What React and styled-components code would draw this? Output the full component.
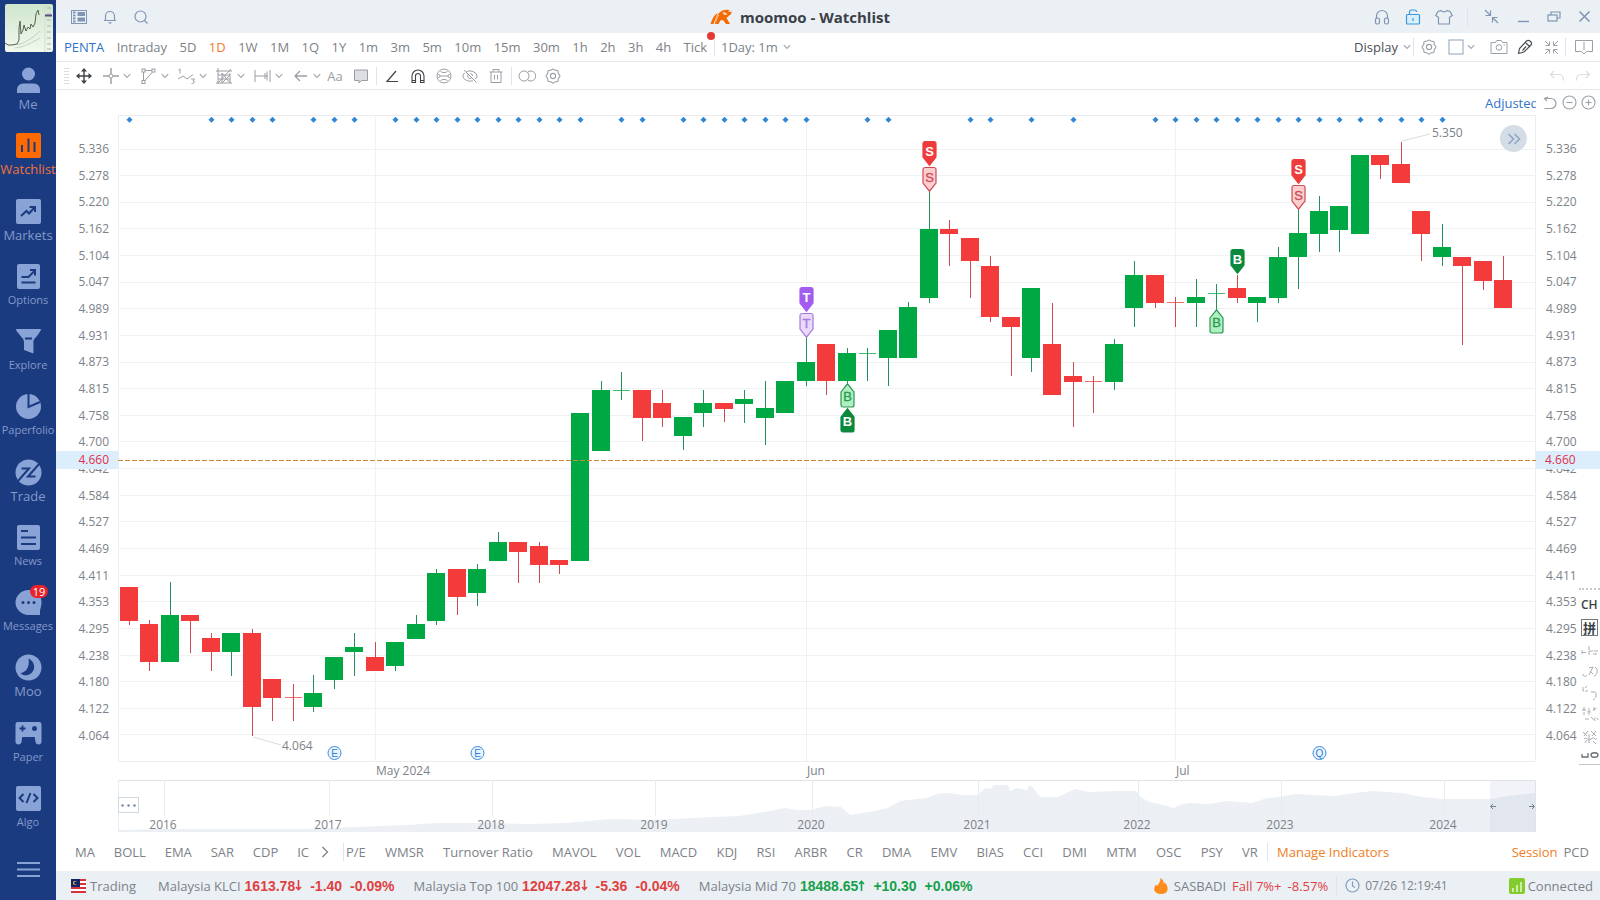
import React from "react";
import styled, { createGlobalStyle, css } from "styled-components";

const GlobalStyle = createGlobalStyle`
  *, *::before, *::after { box-sizing: border-box; }
  body {
    margin: 0;
    background: #fff;
    color: #7d8288;
    font-family: "Open Sans", "Noto Sans", "Noto Sans CJK SC", sans-serif;
    font-size: 13px;
    line-height: 18px;
  }
  button { font: inherit; color: inherit; background: none; border: 0; padding: 0; margin: 0; cursor: pointer; }
`;

/* ---------- shell ---------- */

const Shell = styled.div`
  display: flex;
  min-height: 100vh;
`;

const Sidebar = styled.nav`
  flex: 0 0 56px;
  min-width: 0;
  display: flex;
  flex-direction: column;
  align-items: stretch;
  background: #1b3b80;
`;

const Avatar = styled.div`
  height: 61px;
  padding: 4px 3px 0 5px;
  svg { display: block; border-radius: 2px; }
`;

const NavItem = styled.button`
  flex: 1;
  position: relative;
  display: flex;
  flex-direction: column;
  align-items: center;
  padding-top: 6px;
  color: ${(p) => (p.$active ? "#ff6a00" : "#8aa3d6")};
  font-size: ${(p) => (p.$small ? 11 : 13)}px;
  white-space: nowrap;
  svg { flex: none; }
  span { margin-top: 1px; color: ${(p) => (p.$active ? "#f0733a" : "#8399c9")}; }
`;

const Badge = styled.i`
  position: absolute;
  top: 2px;
  left: 30px;
  width: 18px;
  border-radius: 7px;
  background: #e8232b;
  color: #fff;
  font-style: normal;
  font-size: 11px;
  line-height: 13px;
  text-align: center;
`;

const MenuButton = styled.button`
  flex: 0 0 56px;
  padding-bottom: 6px;
  color: #8aa3d6;
  svg { display: block; margin: 0 auto; }
`;

const Main = styled.main`
  flex: 1;
  min-width: 0;
  display: flex;
  flex-direction: column;
`;

/* ---------- bars ---------- */

const TitleBar = styled.header`
  flex: 0 0 33px;
  display: flex;
  align-items: center;
  background: #ebf0f5;
  color: #7f95b3;
`;

const TitleLeft = styled.div`
  flex: 1 1 0;
  display: flex;
  padding-left: 6px;
`;

const Title = styled.h1`
  display: flex;
  align-items: center;
  gap: 8px;
  margin: 0;
  color: #3b4048;
  font-size: 15px;
  font-weight: 700;
  line-height: 20px;
`;

const TitleRight = styled.div`
  flex: 1 1 0;
  display: flex;
  align-items: center;
  justify-content: flex-end;
  padding-left: 62px;
`;

const IconButton = styled.button`
  flex: none;
  display: inline-flex;
  align-items: center;
  justify-content: center;
  width: ${(p) => p.$w || 26}px;
  height: 24px;
  ${(p) => p.$color && css`color: ${p.$color};`}
`;

const DropButton = styled.button`
  flex: none;
  display: inline-flex;
  align-items: center;
  gap: ${(p) => p.$gap || 3}px;
  height: 24px;
  ${(p) => p.$color && css`color: ${p.$color};`}
`;

const Divider = styled.span`
  flex: none;
  width: 1px;
  height: 18px;
  margin: 0 ${(p) => p.$m ?? 2}px;
  background: #dfe4ea;
`;

const PeriodBar = styled.div`
  flex: 0 0 29px;
  display: flex;
  align-items: center;
  justify-content: space-between;
  padding-left: 8px;
  border-bottom: 1px solid #e6e9ed;
`;

const Periods = styled.div`
  flex: 0 1 727px;
  display: flex;
  align-items: center;
  justify-content: space-between;
`;

const Period = styled.button`
  position: relative;
  color: ${(p) => (p.$tone === "blue" ? "#2f74c8" : p.$tone === "orange" ? "#f47b2a" : "#7d8288")};
  white-space: nowrap;
`;

const RedDot = styled.i`
  position: absolute;
  top: -6px;
  right: -8px;
  width: 8px;
  height: 8px;
  border-radius: 50%;
  background: #e53935;
`;

const BarRight = styled.div`
  display: flex;
  align-items: center;
  color: #9aa0a8;
`;

const LayoutPicker = styled(DropButton)`
  margin: 0 11px 0 6px;
`;

const DrawBar = styled.div`
  flex: 0 0 28px;
  display: flex;
  align-items: center;
  padding: 0 4px 0 8px;
  border-bottom: 1px solid #e6e9ed;
  color: #9a9ea4;
`;

const DropGroup = styled.div`
  display: flex;
  gap: 9px;
  padding: 0 1px 0 3px;
`;

const Spacer = styled.span`
  flex: 1;
`;

/* ---------- chart ---------- */

const ChartHead = styled.div`
  flex: 0 0 25px;
  display: flex;
  align-items: center;
  justify-content: flex-end;
  padding-right: 2px;
  color: #9aa0a8;
`;

const Adjusted = styled.button`
  width: 51px;
  margin-right: 4px;
  overflow: hidden;
  color: #2f74c8;
  text-align: left;
  white-space: nowrap;
`;

const ChartRow = styled.div`
  position: relative;
  flex: 1 0 0;
  min-height: 0;
  display: flex;
`;

const Axis = styled.ul`
  position: relative;
  flex: 0 0 ${(p) => (p.$right ? 64 : 62)}px;
  display: flex;
  flex-direction: column;
  justify-content: space-between;
  margin: 0;
  padding: 25px 9px 35px ${(p) => (p.$right ? 10 : 0)}px;
  list-style: none;
  text-align: ${(p) => (p.$right ? "left" : "right")};
  font-size: 12px;
  line-height: 18px;
`;

const LastPrice = styled.li`
  position: absolute;
  top: 336px;
  left: 0;
  right: 0;
  padding: 0 9px;
  background: #dcedfb;
  color: #e0314b;
`;

const Plot = styled.div`
  flex: 1;
  min-width: 0;
  svg { display: block; width: 100%; height: 100%; }
`;

const NavigatorRow = styled.div`
  flex: 0 0 52px;
  padding: 0 64px 0 62px;
  svg { display: block; width: 100%; height: 100%; }
`;

const JumpButton = styled.button`
  position: absolute;
  top: 10px;
  right: 73px;
  width: 27px;
  height: 27px;
  border-radius: 50%;
  background: #d4dde6;
  color: #8ea5c6;
  svg { display: block; margin: 0 auto; }
`;

const ImeBar = styled.aside`
  position: absolute;
  right: 0;
  bottom: 15px;
  width: 21px;
  height: 177px;
  display: flex;
  flex-direction: column;
  align-items: flex-start;
  padding: 6px 0 0 2px;
  background: #fff;
  border-top: 2px dotted #c8cbd0;
  border-bottom: 1px solid #c2c5ca;
  color: #3b3f46;
  font-size: 12px;
  font-weight: 600;
  line-height: 18px;
`;

const ImeMode = styled.span`
  width: 17px;
  height: 17px;
  margin: 5px 0 8px;
  border: 1px solid #777;
  font-family: "Noto Sans CJK SC", sans-serif;
  font-size: 13px;
  font-weight: 700;
  line-height: 15px;
  text-align: center;
`;

/* ---------- indicators and status ---------- */

const IndicatorBar = styled.div`
  flex: 0 0 39px;
  display: flex;
  align-items: center;
  padding: 0 11px 0 19px;
  white-space: nowrap;
`;

const IndicatorGroup = styled.div`
  flex: 0 1 ${(p) => p.$w}px;
  display: flex;
  justify-content: space-between;
`;

const Indicator = styled.button`
  color: ${(p) => (p.$hot ? "#f07d22" : "#7d8288")};
`;

const Sessions = styled.div`
  display: flex;
  gap: 6px;
  margin-left: auto;
`;

const StatusBar = styled.footer`
  flex: 0 0 29px;
  display: flex;
  align-items: center;
  padding: 0 7px 0 15px;
  background: #ebf0f5;
  white-space: nowrap;
`;

const Market = styled.div`
  display: flex;
  align-items: center;
  gap: 4px;
  width: 87px;
`;

const Quote = styled.div`
  display: flex;
  align-items: center;
  gap: 8px;
  margin-right: 19px;
`;

const QuoteName = styled.span`
  margin-right: -4px;
`;

const QuoteValue = styled.b`
  display: inline-flex;
  align-items: center;
  font-family: "Liberation Sans", Arial, sans-serif;
  font-size: 14px;
  color: ${(p) => (p.$up ? "#17a04a" : "#e0413f")};
`;

const Alert = styled.div`
  display: flex;
  align-items: center;
  gap: 6px;
  margin-left: auto;
  em { font-style: normal; color: #e0413f; }
`;

const Clock = styled.time`
  display: flex;
  align-items: center;
  gap: 5px;
  margin-right: 61px;
  font-size: 12px;
`;

const Connection = styled.div`
  display: flex;
  align-items: center;
  gap: 3px;
`;

/* ---------- icons ---------- */

const Svg = ({ w = 16, h = 16, sw = 1, children }) => (
  <svg width={w} height={h} viewBox={`0 0 ${w} ${h}`} fill="none" stroke="currentColor" strokeWidth={sw} aria-hidden="true">
    {children}
  </svg>
);

const Chevron = () => (
  <Svg w={8} h={6} sw={1.2}><path d="M.8 1.2 4 4.4l3.2-3.2" stroke="#a3a8af" /></Svg>
);

const HexIcon = () => (
  <Svg sw={1.1}>
    <path d="M5.6 2.2c.9 0 1.4-1.2 2.4-1.2s1.5 1.2 2.4 1.2c1 0 2.100-.2 2.600.7.5.8-.2 1.700.3 2.600.4.8 1.600 1.300 1.600 2.500s-1.200 1.700-1.600 2.500c-.5.9.2 1.800-.3 2.600-.5.9-1.600.7-2.600.7-.9 0-1.400 1.400-2.400 1.400s-1.500-1.400-2.400-1.400c-1 0-2.100.2-2.600-.7-.5-.8.2-1.700-.3-2.600C2.300 9.700 1.100 9.200 1.100 8s1.200-1.700 1.600-2.500c.5-.9-.2-1.800.3-2.600.5-.9 1.600-.7 2.600-.7z" />
    <circle cx="8" cy="8" r="2.600" />
  </Svg>
);

const S = "#1b3b80";
const navIcons = {
  Me: <><circle cx="13.500" cy="7" r="6.500" fill="currentColor" /><path d="M2 26v-3.500a6 6 0 0 1 6-6h11a6 6 0 0 1 6 6V26z" fill="currentColor" /></>,
  Watchlist: <><rect x="1" y="1" width="25" height="25" rx="2" fill="currentColor" /><path d="M7 13v7M13.500 6.500V20M19.500 10v10" stroke={S} strokeWidth="2" /></>,
  Markets: <><rect x="1" y="1" width="25" height="25" rx="2" fill="currentColor" /><path d="M6 18l5.500-5 2.500 2.500 5.500-6M14.500 9H20v5" stroke={S} strokeWidth="2" fill="none" /></>,
  Options: <><rect x="2" y="1" width="23" height="25" rx="2" fill="currentColor" /><path d="M6.500 14h7l6-6M15 7h5v5.500M6.500 19.500h14" stroke={S} strokeWidth="2" fill="none" /></>,
  Explore: <><path d="M2 1h23c1.200 0 1.200 1 .6 1.800L22 8c-2 2.600-3.600 3-3.600 6v11.500L9 22V14c0-3-1.600-3.500-3.400-6L1.400 2.800C.8 2 .8 1 2 1z" fill="currentColor" /><path d="M10 10.500h7" stroke={S} strokeWidth="2" /></>,
  Paperfolio: <><circle cx="13.500" cy="13.500" r="12.500" fill="currentColor" /><path d="M13.500 0v14L25 9" stroke={S} strokeWidth="2" /></>,
  Trade: <><circle cx="13.500" cy="13.500" r="13" fill="currentColor" /><path d="M6.500 9.500H14L3 22M24.500 4.500 13 17.500h7.500" stroke={S} strokeWidth="2" /></>,
  News: <><rect x="2" y="1" width="23" height="25" rx="2" fill="currentColor" /><path d="M6 7h7M6 13.500h15M6 20h15" stroke={S} strokeWidth="2" /></>,
  Messages: <><path d="M13.500 1A13 12.500 0 0 1 26.500 14c0 3-1.500 6-1.500 8.500V26H13.500a13 12.500 0 0 1 0-25z" fill="currentColor" /><g fill={S}><circle cx="8" cy="13.500" r="1.500" /><circle cx="13.500" cy="13.500" r="1.500" /><circle cx="19" cy="13.500" r="1.500" /></g></>,
  Moo: <><circle cx="13.500" cy="13.500" r="13" fill="currentColor" /><path d="M13.500 4.500c6 3 7.500 9.500 3.500 14-3.500 3.800-9.500 3.500-11.500.5 5-.3 9.500-5.500 8-14.500z" fill={S} /></>,
  Paper: <><path d="M3 2h21c2 0 2.500 1 2.500 3v17c0 3-5.500 3.500-6 0l-.7-5H7.200l-.7 5c-.5 3.500-6 3-6 0V5c0-2 .5-3 2.500-3z" fill="currentColor" /><path d="M4.500 8.500h6M7.500 5.500v6" stroke={S} strokeWidth="1.800" /><circle cx="19.500" cy="8.500" r="2.500" fill={S} /></>,
  Algo: <><rect x="1" y="1" width="25" height="25" rx="2" fill="currentColor" /><path d="M8.500 9 4.500 13l4 4M18.500 9l4 4-4 4M15.500 8l-4 10" stroke={S} strokeWidth="2" /></>,
};

const NavIcon = ({ name }) => <Svg w={27} h={27}><g stroke="none">{navIcons[name]}</g></Svg>;

const navItems = [
  { name: "Me" },
  { name: "Watchlist", active: true },
  { name: "Markets" },
  { name: "Options", small: true },
  { name: "Explore", small: true },
  { name: "Paperfolio", small: true },
  { name: "Trade" },
  { name: "News", small: true },
  { name: "Messages", small: true, badge: 19 },
  { name: "Moo" },
  { name: "Paper", small: true },
  { name: "Algo", small: true },
];

const drawDrops = [
  ["Cross line", <><path d="M9 0v16M1 8h16" stroke="#6c7076" /><circle cx="9" cy="8" r="2" fill="#fff" /></>],
  ["Shapes", <><path d="M3.500 4v9M5 2.500h7M12.500 4 4.500 13" /><rect x="2" y="1" width="3" height="3" /><rect x="12" y="1" width="3" height="3" /><rect x="2" y="12.500" width="3" height="3" /></>],
  ["Waves", <><path d="M.5 2 2 1v4.500M0 11l5-3 4 3 6-4.500M13 11h3.500l-1.500 2c2 0 2 2.500-.5 2.500h-1" /></>],
  ["Fibonacci", <><path d="M2 0v16M0 3h16M2 7h12M2 11h12M0 15h16M2 15 15 1M6 5v10M14 5v10M6 5l8 10M6 15l8-8" /></>],
  ["Measure", <><path d="M1 2v12M16 2v12M1 8h13M11 5v6M13 3.500v9" /></>],
  ["Arrow", <path d="M15 8H3M8 3 3 8l5 5" strokeWidth="1.300" />],
];

/* ---------- chart data (plot units, origin at the plot's top left corner) ---------- */

const STEP = 20.522;
const cx = (i) => Math.round(10.5 + STEP * i);

// [up, body top, body bottom, high, low]
const candles = [
  [0, 472, 506, 472, 510], [0, 509, 547, 505, 556], [1, 500, 547, 467, 547], [0, 500, 506, 500, 538],
  [0, 523, 537, 518, 556], [1, 518, 537, 518, 561], [0, 518, 592, 514, 621], [0, 564, 583, 564, 606],
  [0, 582, 583, 569, 606], [1, 578, 592, 560, 597], [1, 542, 565, 542, 574], [1, 532, 537, 518, 561],
  [0, 542, 556, 527, 556], [1, 527, 551, 527, 556], [1, 509, 524, 500, 524], [1, 458, 506, 454, 510],
  [0, 454, 482, 454, 500], [1, 454, 478, 449, 491], [1, 427, 446, 417, 446], [0, 427, 437, 427, 468],
  [0, 431, 450, 427, 468], [0, 445, 450, 445, 459], [1, 298, 446, 298, 446], [1, 275, 336, 266, 336],
  [1, 275, 276, 257, 285], [0, 275, 303, 275, 326], [0, 288, 303, 275, 312], [1, 302, 321, 302, 335],
  [1, 288, 298, 275, 312], [0, 288, 294, 288, 307], [1, 284, 289, 275, 308], [1, 293, 303, 266, 330],
  [1, 266, 298, 266, 298], [1, 247, 266, 222, 271], [0, 229, 266, 229, 280], [1, 238, 266, 233, 268],
  [1, 238, 239, 233, 266], [1, 215, 243, 215, 271], [1, 192, 243, 187, 243], [1, 114, 183, 76, 188],
  [0, 114, 119, 105, 151], [0, 123, 146, 123, 183], [0, 151, 202, 141, 207], [0, 202, 212, 202, 261],
  [1, 173, 243, 173, 257], [0, 229, 280, 188, 280], [0, 261, 267, 247, 312], [0, 266, 267, 261, 298],
  [1, 229, 267, 224, 275], [1, 160, 193, 146, 212], [0, 160, 188, 160, 193], [0, 187, 188, 182, 212],
  [1, 182, 188, 164, 212], [1, 178, 179, 169, 195], [0, 173, 183, 160, 188], [1, 182, 188, 182, 207],
  [1, 142, 183, 132, 188], [1, 118, 142, 95, 174], [1, 96, 119, 81, 137], [1, 91, 115, 91, 137],
  [1, 40, 119, 40, 119], [0, 40, 50, 40, 64], [0, 49, 68, 27, 68], [0, 96, 119, 96, 146],
  [1, 132, 142, 109, 151], [0, 142, 151, 142, 230], [0, 146, 166, 146, 175], [0, 165, 193, 141, 193],
];

const newsDays = [0, 4, 5, 6, 7, 9, 10, 11, 13, 14, 15, 16, 17, 18, 19, 20, 21, 22, 24, 25, 27, 28, 29, 30, 31, 32, 33, 36, 37, 41, 42, 44, 46,
  50, 51, 52, 53, 54, 55, 56, 57, 58, 59, 60, 61, 62, 63, 64];

const tones = {
  T: { solid: "#a35cf0", line: "#a57be0", soft: "#ead9fb" },
  S: { solid: "#ef3b3b", line: "#cf4a55", soft: "#fbcfd0" },
  B: { solid: "#0c8a3c", line: "#2c9656", soft: "#aef0bf" },
};

// [letter, candle index, top, filled, points up]
const flags = [
  ["T", 33, 172, true, false], ["T", 33, 198, false, false],
  ["B", 35, 268, false, true], ["B", 35, 293, true, true],
  ["S", 39, 26, true, false], ["S", 39, 52, false, false],
  ["B", 53, 194, false, true], ["B", 54, 134, true, false],
  ["S", 57, 44, true, false], ["S", 57, 70, false, false],
];

const Flag = ({ letter, x, y, filled, up }) => {
  const t = tones[letter];
  const d = up
    ? "M-6.500 9 0 .8 6.500 9v13a2 2 0 0 1-2 2h-9a2 2 0 0 1-2-2z"
    : "M-4.500.5h9a2 2 0 0 1 2 2V16L0 24.200-6.500 16V2.500a2 2 0 0 1 2-2z";
  return (
    <g transform={`translate(${x + 0.5} ${y})`}>
      <path d={d} fill={filled ? t.solid : t.soft} stroke={filled ? t.solid : t.line} strokeWidth="1.200" />
      <text y={up ? 18 : 15} textAnchor="middle" fontSize="13" fontWeight={filled ? 700 : 400}
        fontFamily="Liberation Sans, sans-serif" fill={filled ? "#fff" : t.line}
        stroke={filled ? "none" : t.line} strokeWidth="0.3">{letter}</text>
    </g>
  );
};

const prices = ["5.336", "5.278", "5.220", "5.162", "5.104", "5.047", "4.989", "4.931", "4.873", "4.815", "4.758", "4.700",
  "4.642", "4.584", "4.527", "4.469", "4.411", "4.353", "4.295", "4.238", "4.180", "4.122", "4.064"];

const gridY = prices.map((_, i) => Math.round(33.5 + i * 26.636) + 0.5);

const PriceAxis = ({ right }) => (
  <Axis $right={right}>
    {prices.map((p) => <li key={p}>{p}</li>)}
    <LastPrice>4.660</LastPrice>
  </Axis>
);

const CandleChart = () => (
  <svg viewBox="0 0 1418 665" role="img" aria-label="PENTA daily candlestick chart">
    <g stroke="#eff1f3" fill="none">
      <path d="M.5.500H1417.500V646.500H.5z" stroke="#ebeef0" />
      {gridY.map((y) => <path key={y} d={`M0 ${y}H1418`} />)}
      {[12, 33, 51].map((i) => <path key={i} d={`M${cx(i) + 0.5} 0V646`} />)}
    </g>
    {newsDays.map((i) => (
      <path key={i} d={`M${cx(i) + 0.5} 1.800l3 3-3 3-3-3z`} fill="#2f86d2" />
    ))}
    {candles.map(([up, top, bottom, high, low], i) => {
      const c = up ? "#00a843" : "#f23b3a";
      const doji = bottom - top < 2;
      return (
        <g key={i} fill={c}>
          <rect x={cx(i)} y={high} width="1" height={low - high} fill={up ? "#23905a" : "#cf4a4f"} />
          <rect x={cx(i) - 9 + (doji ? 1 : 0)} y={top} width={doji ? 17 : 18} height={Math.max(1, bottom - top)} opacity={doji ? 0.75 : 1} />
        </g>
      );
    })}
    <path d="M0 345.500H1418" stroke="#c98a3a" strokeDasharray="5 2" />
    {flags.map(([letter, i, y, filled, up]) => (
      <Flag key={`${i}-${y}`} letter={letter} x={cx(i)} y={y} filled={filled} up={up} />
    ))}
    <g stroke="#d9dcdf" fill="none">
      <path d="M135 622 163 630" />
      <path d="M1284 26 1312 19" />
    </g>
    <g fontSize="12" fill="#7d8288">
      <text x="164" y="635">4.064</text>
      <text x="1314" y="22">5.350</text>
      <text x="258" y="660">May 2024</text>
      <text x="689" y="660">Jun</text>
      <text x="1058" y="660">Jul</text>
    </g>
    {[[10, "E"], [17, "E"], [58, "Q"]].map(([i, t]) => (
      <g key={i}>
        <circle cx={cx(i) + 0.5} cy="638" r="6.500" fill="#eaf4fd" stroke="#3b8fe0" />
        <text x={cx(i) + 0.5} y="642" textAnchor="middle" fontSize="10" fontFamily="Liberation Sans, sans-serif" fill="#2f7fd6">{t}</text>
      </g>
    ))}
  </svg>
);

const profile = [[0, 50], [46, 49], [187, 49], [238, 47], [289, 45], [320, 43], [374, 43], [412, 44], [447, 43], [493, 39], [537, 40],
  [575, 38], [595, 37], [621, 36], [646, 32], [667, 28], [680, 30], [694, 30], [707, 26], [723, 27], [732, 35], [751, 32], [770, 28],
  [782, 21], [790, 20], [809, 18], [818, 14], [829, 13], [845, 15], [860, 15], [867, 8], [873, 9], [876, 5], [890, 5], [892, 11],
  [899, 8], [909, 10], [912, 5], [917, 10], [922, 17], [940, 17], [950, 12], [958, 9], [970, 12], [998, 11], [1018, 11], [1024, 18],
  [1032, 22], [1045, 25], [1056, 28], [1062, 25], [1071, 23], [1090, 24], [1110, 21], [1134, 23], [1149, 18], [1160, 17], [1178, 14],
  [1216, 16], [1236, 13], [1255, 11], [1284, 13], [1304, 17], [1326, 19], [1372, 19], [1391, 16], [1415, 13], [1418, 13]];

const years = [["2016", 46], ["2017", 211], ["2018", 374], ["2019", 537], ["2020", 694], ["2021", 860], ["2022", 1020], ["2023", 1163], ["2024", 1326]];

const TimeNavigator = () => (
  <svg viewBox="0 0 1418 52" role="img" aria-label="Price history from 2016 to 2024">
    <path d={`M0 52 ${profile.map(([x, y]) => `L${x} ${y}`).join(" ")} V52z`} fill="#ecf0f4" />
    <g stroke="#e8ebef">
      <path d="M0 .5H1418" stroke="#dfe2e6" />
      <path d="M.5 0V52M1417.500 0V52" />
      {years.map(([y, x]) => <path key={y} d={`M${x + 0.5} 0V36`} />)}
    </g>
    <rect x="1372" y="1" width="46" height="51" fill="#c3cde0" opacity=".24" />
    <g stroke="#6f7f96" fill="none"><path d="M1378 26.500h-5M1375 24l-2.500 2.500 2.500 2.500M1411 26.500h5M1414 24l2.500 2.500-2.500 2.500" /></g>
    <rect x=".5" y="17.500" width="20" height="15" fill="#fff" stroke="#cfd9e2" />
    <g fill="#6d87a8"><circle cx="4.500" cy="25.500" r="1.200" /><circle cx="10.500" cy="25.500" r="1.200" /><circle cx="16.500" cy="25.500" r="1.200" /></g>
    <g fontSize="12" fill="#7d8288" textAnchor="middle">
      {years.map(([y, x]) => <text key={y} x={x - 1} y="49">{y}</text>)}
    </g>
  </svg>
);

const indicatorsA = ["MA", "BOLL", "EMA", "SAR", "CDP", "IC"];
const indicatorsB = ["P/E", "WMSR", "Turnover Ratio", "MAVOL", "VOL", "MACD", "KDJ", "RSI", "ARBR", "CR", "DMA", "EMV", "BIAS", "CCI", "DMI", "MTM", "OSC", "PSY", "VR"];
const periods = ["Intraday", "5D", "1D", "1W", "1M", "1Q", "1Y", "1m", "3m", "5m", "10m", "15m", "30m", "1h", "2h", "3h", "4h"];
const quotes = [
  ["Malaysia KLCI", "1613.78", "-1.40", "-0.09%", false],
  ["Malaysia Top 100", "12047.28", "-5.36", "-0.04%", false],
  ["Malaysia Mid 70", "18488.65", "+10.30", "+0.06%", true],
];

const ShrinkCorners = () => (
  <Svg w={15} h={15}><path d="M1 1l4 4M5.500 1.500v4h-4M14 1l-4 4M9.500 1.500v4h4M1 14l4-4M5.500 13.500v-4h-4M14 14l-4-4M9.500 13.500v-4h4" /></Svg>
);

export default function App() {
  return (
    <>
      <GlobalStyle />
      <Shell>
        <Sidebar>
          <Avatar>
            <svg width="48" height="48" viewBox="0 0 48 48" role="img" aria-label="Profile picture">
              <defs><linearGradient id="av" x2="0" y2="1"><stop offset="0" stopColor="#cfe6cd" /><stop offset="1" stopColor="#f2f8ee" /></linearGradient></defs>
              <rect width="48" height="48" fill="url(#av)" />
              <path d="M0 39l3 2h4l5-1 2-4 0-12 1-7 1 13 2-4 1-5 2 6 2-4 2 2 1-5 2 3 2-4 1-9 2-4 1 5" fill="none" stroke="#55604f" />
              <path d="M12 41c8-2 16-7 23-14M10 44c10-1 18-6 25-10" fill="none" stroke="#b9c4b6" strokeWidth=".8" />
              <path d="M40 0V48" stroke="#d5ddd2" />
              <path d="M42 4h4M42 10h4M42 16h4M42 22h4M42 28h4M42 34h4M42 40h4M42 45h4" stroke="#a9b3a8" />
              <path d="M40 11.500h7" stroke="#5c4a86" strokeWidth="2" />
            </svg>
          </Avatar>
          {navItems.map((n) => (
            <NavItem key={n.name} $active={n.active} $small={n.small}>
              <NavIcon name={n.name} />
              <span>{n.name}</span>
              {n.badge && <Badge>{n.badge}</Badge>}
            </NavItem>
          ))}
          <MenuButton aria-label="Menu">
            <Svg w={24} h={16} sw={2}><path d="M1 2h23M1 8.500h23M1 15h23" /></Svg>
          </MenuButton>
        </Sidebar>

        <Main>
          <TitleBar>
            <TitleLeft>
              <IconButton $w={33} aria-label="Layout">
                <Svg w={16} h={14}><rect x=".5" y=".5" width="15" height="13" /><path d="M2 2.500h2.500M2 5.500h2.500M2 8.500h2.500M2 11.500h2.500" strokeWidth="2" /><path d="M6.500 4h7.500M6.500 9.500h7.500" strokeWidth="4" /></Svg>
              </IconButton>
              <IconButton $w={29} aria-label="Notifications">
                <Svg w={14} h={14} sw={1.2}><path d="M1 10.500h12M2.500 10.500V6a4.500 4.500 0 0 1 9 0v4.500M5.500 12.800h3" /></Svg>
              </IconButton>
              <IconButton $w={33} aria-label="Search">
                <Svg w={14} h={14} sw={1.2}><circle cx="6.500" cy="6.500" r="5.500" /><path d="m10.500 10.500 3 3" /></Svg>
              </IconButton>
            </TitleLeft>
            <Title>
              <svg width="22" height="16" viewBox="0 0 22 16" aria-hidden="true">
                <path d="M.5 15C2 10 4.500 5.500 7.500 4L5.500 9.500 3.500 15z" fill="#f56a00" />
                <path d="M5 15C5.500 9 8 3.500 12.500 1.500c2.500-1 6-.8 7.500-.2l-2 1.200c1 .6 2.500.5 3.500-.2.3 2.300-.8 3.700-2.500 4.200-1 1.500-2 1.500-2.500 2.500l3.500 6h-4L13.500 11.500c-1.500-1-2.500-.5-3.500.5L8.500 15z" fill="#f56a00" />
                <path d="M12.500 3.500c2-.8 3.500 0 5 2-1.500 1-4.500.5-5-2z" fill="#fbd9bf" />
                <path d="M9 6c-1.500 2-2.500 4-3 6.500" stroke="#fbd9bf" fill="none" strokeWidth=".8" />
              </svg>
              moomoo - Watchlist
            </Title>
            <TitleRight>
              <IconButton $w={31} aria-label="Support">
                <Svg sw={1.2}><path d="M2.500 10V7a5.500 5.500 0 0 1 11 0v3" /><rect x="1.500" y="9" width="4" height="6" rx="1.800" /><rect x="10.500" y="9" width="4" height="6" rx="1.800" /></Svg>
              </IconButton>
              <IconButton $w={31} $color="#3a9ad9" aria-label="Unlock trade">
                <Svg sw={1.2}><rect x="1.500" y="5.500" width="13" height="9.500" rx="1" fill="#d9effb" /><path d="M4.500 5V3.200A2 2 0 0 1 6.500 1h3a2 2 0 0 1 2 2M8 9v3" /></Svg>
              </IconButton>
              <IconButton $w={31} aria-label="Theme">
                <Svg w={18} h={16} sw={1.2}><path d="M6 1.500c1 1.800 5 1.800 6 0l3 1 2.300 4-2.800 1.800V15h-11V8.300L.7 6.500l2.300-4z" /></Svg>
              </IconButton>
              <Divider $m={8} />
              <IconButton $w={31} aria-label="Compact">
                <Svg w={15} h={15} sw={1.2}><path d="M1 1l5 5M6.500 1.500v5h-5M14 14 9 9M8.500 13.500v-5h5" /></Svg>
              </IconButton>
              <IconButton $w={31} aria-label="Minimize"><Svg w={12} sw={1.4}><path d="M1 12.500h11" /></Svg></IconButton>
              <IconButton $w={31} aria-label="Restore">
                <Svg w={14} h={14} sw={1.2}><rect x="1" y="5" width="9" height="6" /><path d="M4 5V2h9v6h-3" /></Svg>
              </IconButton>
              <IconButton $w={31} aria-label="Close"><Svg w={13} h={13} sw={1.6}><path d="m1.500 1.500 10 10M11.500 1.500l-10 10" /></Svg></IconButton>
            </TitleRight>
          </TitleBar>

          <PeriodBar>
            <Periods>
              <Period $tone="blue">PENTA</Period>
              {periods.map((p) => <Period key={p} $tone={p === "1D" ? "orange" : undefined}>{p}</Period>)}
              <Period>Tick<RedDot /></Period>
              <Divider $m={-6} />
              <DropButton $gap={5}>1Day: 1m<Chevron /></DropButton>
            </Periods>
            <BarRight>
              <DropButton $color="#4a4e55" $gap={5}>Display<Chevron /></DropButton>
              <Divider />
              <IconButton aria-label="Chart settings"><HexIcon /></IconButton>
              <LayoutPicker aria-label="Layout grid">
                <Svg><rect x="1" y="1" width="14" height="14" stroke="#8fa3be" /></Svg><Chevron />
              </LayoutPicker>
              <IconButton aria-label="Screenshot">
                <Svg w={18}><path d="M1 3.500h4.500l1.200-2h4.600l1.200 2H17v11H1z" /><circle cx="9" cy="8.500" r="2.800" /><path d="M13.500 6h1.500" /></Svg>
              </IconButton>
              <IconButton $color="#4a4e55" aria-label="Draw">
                <Svg sw={1.2}><path d="m1.500 14.500 1-5 7-7.500c2-2 6.500 1.500 4.500 4L7 13zM8.500 3.500l4.500 4.500M9 7.500l-3.500 4" /></Svg>
              </IconButton>
              <IconButton aria-label="Exit full screen"><ShrinkCorners /></IconButton>
              <Divider $m={1} />
              <IconButton $w={33} aria-label="Guide">
                <Svg w={18}><path d="M.5 1.500h17v11h-6L9 15l-2.500-2.500h-6zM9 3v8" /></Svg>
              </IconButton>
            </BarRight>
          </PeriodBar>

          <DrawBar>
            <Svg w={5} h={16}><path d="M0 .5h5M0 3.500h5M0 6.500h5M0 9.500h5M0 12.500h5M0 15.500h5" stroke="#dadcdf" /></Svg>
            <IconButton $w={30} $color="#3f434a" aria-label="Move">
              <Svg sw={1.4}><path d="M8 2v12M2 8h12" /><path d="M8 0l3 3.500H5zM8 16l3-3.500H5zM0 8l3.500-3v6zM16 8l-3.500-3v6z" fill="currentColor" stroke="none" /></Svg>
            </IconButton>
            <DropGroup>
              {drawDrops.map(([label, icon]) => (
                <DropButton key={label} aria-label={label}><Svg w={18}>{icon}</Svg><Chevron /></DropButton>
              ))}
            </DropGroup>
            <IconButton>Aa</IconButton>
            <IconButton aria-label="Comment">
              <Svg><path d="M1.500 2h13v10.500h-6L6 15v-2.500H1.500z" fill="#dcdee1" /></Svg>
            </IconButton>
            <Divider />
            <IconButton $color="#3f434a" aria-label="Keep drawing"><Svg w={14} sw={1.2}><path d="M11 3 2 13.500h11" /></Svg></IconButton>
            <IconButton $color="#3f434a" aria-label="Magnet">
              <Svg sw={1.1}><path d="M2 14.500V8a6 6 0 0 1 12 0v6.500h-3.500V8a2.500 2.500 0 0 0-5 0v6.500zM2 12.500h3.500M10.500 12.500H14" /></Svg>
            </IconButton>
            <IconButton aria-label="Sync drawings">
              <Svg><path d="M1.200 6.500a7 7 0 0 1 13.600 0M1.200 9.500a7 7 0 0 0 13.600 0M4 8h8M4.500 3.500c2 1.500 5 1.500 7 0M4.500 12.500c2-1.500 5-1.500 7 0" /><circle cx="2.500" cy="8" r="1.500" /><circle cx="13.500" cy="8" r="1.500" /></Svg>
            </IconButton>
            <IconButton aria-label="Hide drawings">
              <Svg><path d="M4.500 3.500a7.500 6 0 0 1 10.700 4.500 8 6 0 0 1-2 3.200M11 12.800A7.500 6 0 0 1 .8 8a8 6 0 0 1 2-3.200M2 2l12.500 12.500" /><path d="M6 6.500a2.600 2.600 0 0 0 3.600 3.600M8.500 5.500A2.600 2.600 0 0 1 10.600 8" /></Svg>
            </IconButton>
            <IconButton aria-label="Delete drawings">
              <Svg w={14}><path d="M.5 4h13M4 4V1.500h6V4M2 4v10.500h10V4M5.500 7v4.500M8.500 7v4.500" /></Svg>
            </IconButton>
            <Divider />
            <IconButton aria-label="Compare">
              <Svg w={18}><circle cx="6" cy="8" r="5" /><path d="M9.500 4.200a5 5 0 1 1 0 7.600" /></Svg>
            </IconButton>
            <IconButton aria-label="Drawing settings"><HexIcon /></IconButton>
            <Spacer />
            <IconButton $color="#dadde1" aria-label="Undo"><Svg sw={1.2}><path d="M5 3 1.500 6.500 5 10M2 6.500h8c3 0 4.500 2 4.500 6" /></Svg></IconButton>
            <IconButton $color="#dadde1" aria-label="Redo"><Svg sw={1.2}><path d="M11 3l3.500 3.500L11 10M14 6.500H6c-3 0-4.500 2-4.500 6" /></Svg></IconButton>
          </DrawBar>

          <ChartHead>
            <Adjusted>Adjusted</Adjusted>
            <IconButton $w={20} aria-label="Reset zoom"><Svg w={14} h={14} sw={1.2}><path d="M5 1 1.500 2.500 4 5M2 2.500h6a5 5 0 0 1 0 10H1.500" /></Svg></IconButton>
            <IconButton $w={19} aria-label="Zoom out"><Svg w={15} h={15} sw={1.1}><circle cx="7.500" cy="7.500" r="6.500" /><path d="M4.500 7.500h6" /></Svg></IconButton>
            <IconButton $w={19} aria-label="Zoom in"><Svg w={15} h={15} sw={1.1}><circle cx="7.500" cy="7.500" r="6.500" /><path d="M4.500 7.500h6M7.500 4.500v6" /></Svg></IconButton>
          </ChartHead>

          <ChartRow>
            <PriceAxis />
            <Plot><CandleChart /></Plot>
            <PriceAxis right />
            <JumpButton aria-label="Jump to latest">
              <Svg w={14} h={12} sw={1.6}><path d="m1.500 1 5 5-5 5M7.500 1l5 5-5 5" /></Svg>
            </JumpButton>
            <ImeBar>
              <span>CH</span>
              <ImeMode>拼</ImeMode>
              <Svg w={18} h={118}>
                <g stroke="#a9adb3">
                  <path d="M1 6v5M1 8.500h5M8 2v9M8 7h9M12 10h4" strokeDasharray="4 1" />
                  <path d="M8 24l4-1-4 8M2 30c0 3 3 3 4 1M14 23c4 3 2 8-1 9M9 27l3 3" />
                  <path d="M2 43v4h5M10 48h5v4c0 3-2 3-3 4M4 44l2-2" strokeDasharray="5 1" />
                  <path d="M1 66h4M3 63v8M8 64v7M6 68h5M13 63v5M12 66l4-2M4 75h4M10 73l3 3M14 77c-2-3 3-5 3-1" strokeDasharray="4 1" />
                  <path d="M2 88l4 4M7 87l-4 5M10 87l5 5M15 87l-4 5M3 95c3-3 4 3 7 0s4 2 6-1M4 99l2-3M12 97l3 3M8 90v9" />
                </g>
                <path d="M1 110v3h6v-4M10 111c0-3 7-3 7 0s-7 3-7 0z" stroke="#6b6f76" strokeWidth="1.300" />
              </Svg>
            </ImeBar>
          </ChartRow>

          <NavigatorRow><TimeNavigator /></NavigatorRow>

          <IndicatorBar>
            <IndicatorGroup $w={234}>
              {indicatorsA.map((i) => <Indicator key={i}>{i}</Indicator>)}
            </IndicatorGroup>
            <IconButton $w={32} aria-label="More indicators"><Svg w={8} h={12} sw={1.3}><path d="m1.500 1 5 5-5 5" /></Svg></IconButton>
            <Divider />
            <IndicatorGroup $w={912}>
              {indicatorsB.map((i) => <Indicator key={i}>{i}</Indicator>)}
            </IndicatorGroup>
            <Divider $m={9} />
            <Indicator $hot>Manage Indicators</Indicator>
            <Sessions><Indicator $hot>Session</Indicator><Indicator>PCD</Indicator></Sessions>
          </IndicatorBar>

          <StatusBar>
            <Market>
              <svg width="15" height="14" viewBox="0 0 15 14" aria-hidden="true">
                <rect width="15" height="14" fill="#fff" />
                <path d="M0 1h15M0 5h15M0 9h15M0 13h15" stroke="#d8323c" strokeWidth="2" />
                <rect width="9" height="8" fill="#14246b" />
                <circle cx="4" cy="4" r="2" fill="#f3c623" /><circle cx="4.800" cy="4" r="1.600" fill="#14246b" />
              </svg>
              Trading
            </Market>
            {quotes.map(([name, value, diff, pct, up]) => (
              <Quote key={name}>
                <QuoteName>{name}</QuoteName>
                <QuoteValue $up={up}>
                  {value}
                  <Svg w={7} h={11} sw={1.6}><path d={up ? "M3.500 11V1.500M1 4l2.500-2.500L6 4" : "M3.500 0v9.500M1 7l2.500 2.500L6 7"} /></Svg>
                </QuoteValue>
                <QuoteValue $up={up}>{diff}</QuoteValue>
                <QuoteValue $up={up}>{pct}</QuoteValue>
              </Quote>
            ))}
            <Alert>
              <svg width="14" height="16" viewBox="0 0 14 16" aria-hidden="true"><path d="M6.500 0c3 2 3.500 4 3.200 6L11 4.500c2 2.500 3 5 2.500 7.500-.5 2.500-3 4-6.500 4s-6-1.500-6.700-4C-.2 9.500 1 8 2 6.500l1 1.500C4.500 6 6.500 4 6.500 0z" fill="#ff8c1a" /></svg>
              <span>SASBADI</span>
              <em>Fall 7%+</em>
              <em>-8.57%</em>
            </Alert>
            <Divider $m={8} />
            <Clock>
              <Svg w={15} h={15} sw={1.2}><circle cx="7.500" cy="7.500" r="6.500" stroke="#7f9dbf" /><path d="M7.500 3.500v4.500l2.500 1.500" stroke="#7f9dbf" /></Svg>
              07/26 12:19:41
            </Clock>
            <Connection>
              <svg width="16" height="16" viewBox="0 0 16 16" aria-hidden="true"><rect width="16" height="16" rx="2" fill="#84cc2e" /><path d="M4 14v-4M8 14V7M12 14V4" stroke="#e8f7d2" strokeWidth="1.500" /></svg>
              Connected
            </Connection>
          </StatusBar>
        </Main>
      </Shell>
    </>
  );
}
